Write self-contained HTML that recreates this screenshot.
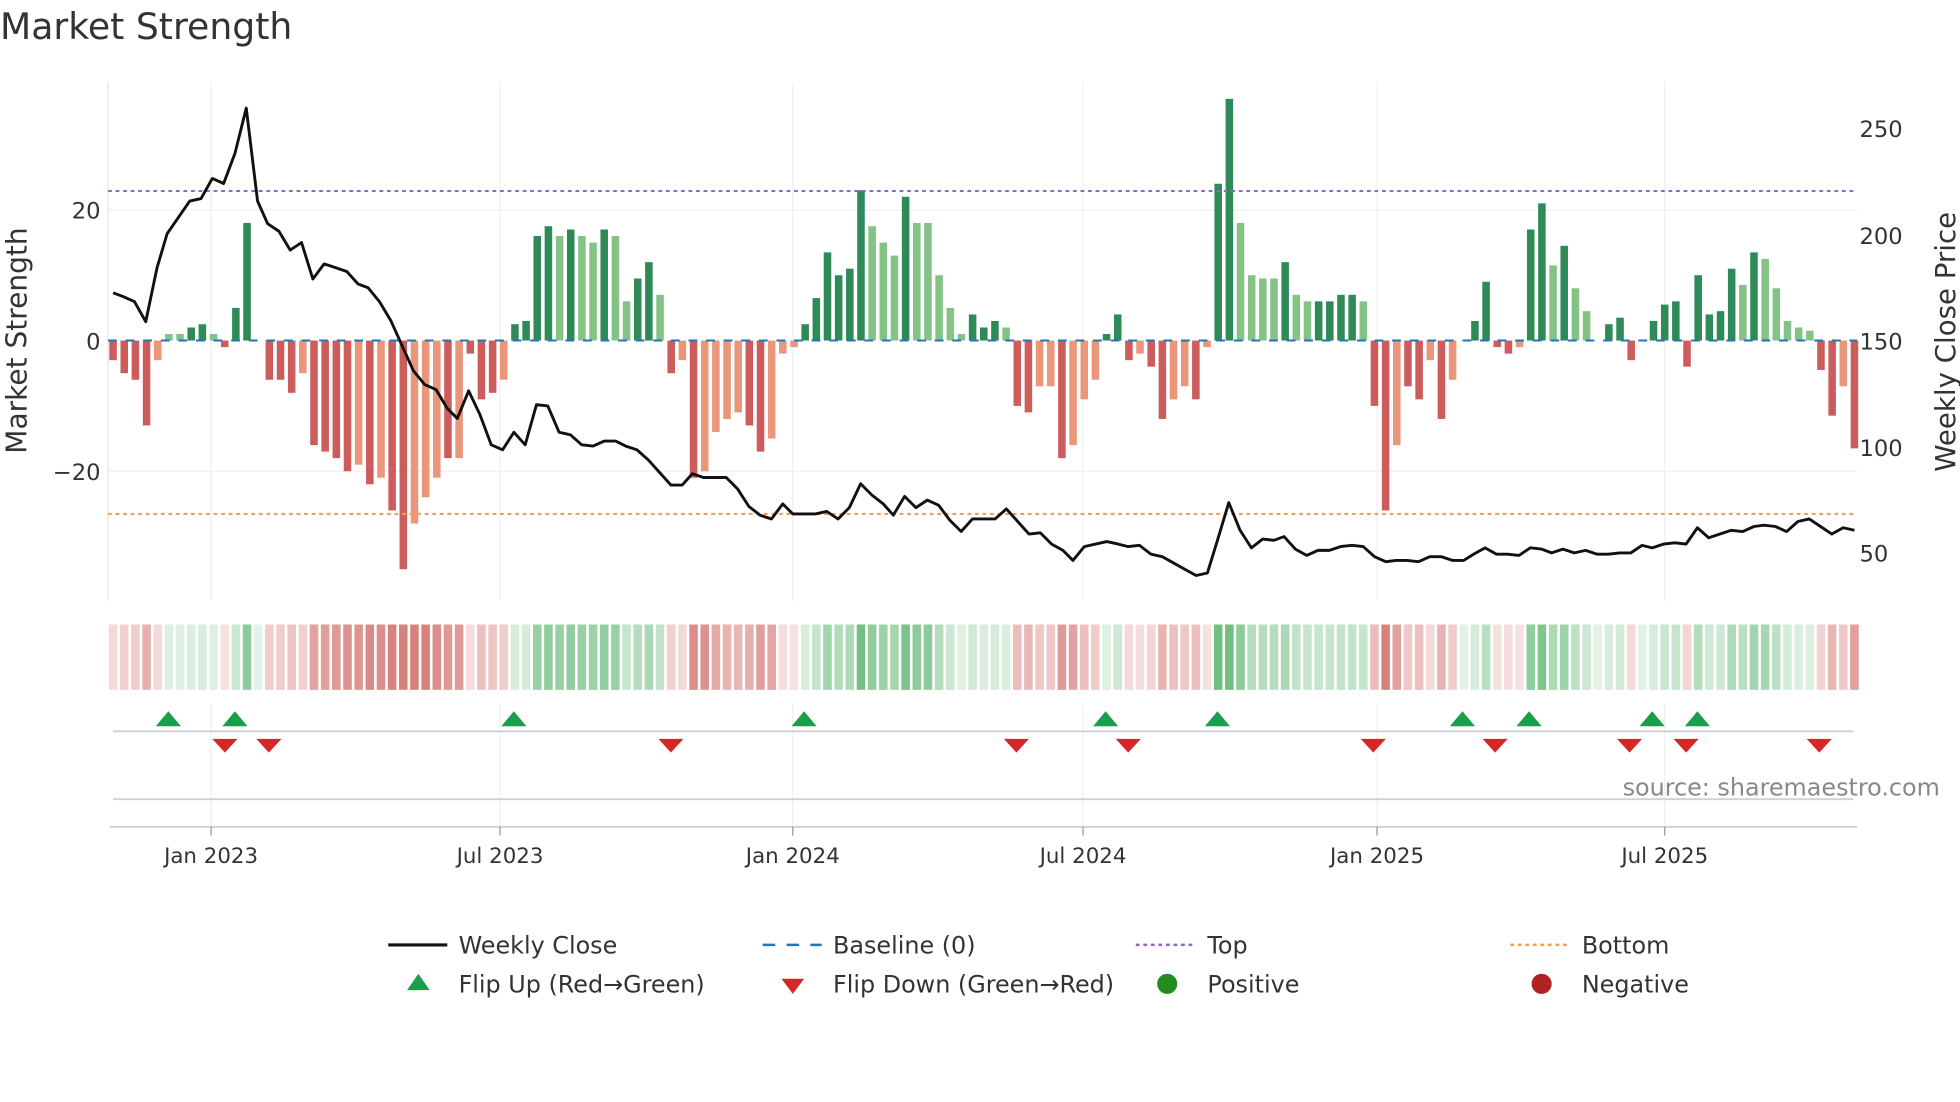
<!DOCTYPE html>
<html><head><meta charset="utf-8"><style>
html,body{margin:0;padding:0;background:#fff;}
svg{display:block;font-family:"DejaVu Sans","Liberation Sans",sans-serif;}
</style></head><body>
<svg id="s" width="1960" height="1102" viewBox="0 0 1560 877" xmlns="http://www.w3.org/2000/svg">
<rect width="1560" height="877" fill="#fff"/>
<text x="0" y="31" font-size="28.8" fill="#333">Market Strength</text>
<g stroke="#eef0f3" stroke-width="1">
<line x1="86" y1="167" x2="1478" y2="167"/><line x1="86" y1="375" x2="1478" y2="375"/>
<line x1="168" y1="65" x2="168" y2="478"/><line x1="398" y1="65" x2="398" y2="478"/>
<line x1="631" y1="65" x2="631" y2="478"/><line x1="862" y1="65" x2="862" y2="478"/>
<line x1="1096" y1="65" x2="1096" y2="478"/><line x1="1325" y1="65" x2="1325" y2="478"/>
<line x1="168" y1="560" x2="168" y2="658"/><line x1="398" y1="560" x2="398" y2="658"/>
<line x1="631" y1="560" x2="631" y2="658"/><line x1="862" y1="560" x2="862" y2="658"/>
<line x1="1096" y1="560" x2="1096" y2="658"/><line x1="1325" y1="560" x2="1325" y2="658"/>
</g>
<line x1="86" y1="65" x2="86" y2="478" stroke="#e3e6ea"/>
<g id="bars"></g>
<g id="heat"></g>
<line x1="86" y1="271" x2="1478" y2="271" stroke="#1f77b4" stroke-width="1.6" stroke-dasharray="7,7"/>
<line x1="86" y1="152" x2="1478" y2="152" stroke="#9467bd" stroke-width="1.6" stroke-dasharray="3,3"/>
<line x1="86" y1="409" x2="1478" y2="409" stroke="#f0a050" stroke-width="1.6" stroke-dasharray="3,3"/>
<polyline id="line" fill="none" stroke="#111" stroke-width="2.3" stroke-linejoin="round"/>
<g font-size="18" fill="#333">
<text x="80" y="174" text-anchor="end">20</text>
<text x="80" y="278" text-anchor="end">0</text>
<text x="80" y="382" text-anchor="end">−20</text>
<text x="1480" y="109">250</text>
<text x="1480" y="194">200</text>
<text x="1480" y="278">150</text>
<text x="1480" y="363">100</text>
<text x="1480" y="447">50</text>
<text transform="translate(21,271) rotate(-90)" text-anchor="middle" font-size="22.3">Market Strength</text>
<text transform="translate(1556,272) rotate(-90)" text-anchor="middle" font-size="22">Weekly Close Price</text>
</g>
<line x1="90" y1="582" x2="1475" y2="582" stroke="#cdd0d4" stroke-width="1.5"/>
<line x1="90" y1="636" x2="1475" y2="636" stroke="#cdd0d4" stroke-width="1.5"/>
<line x1="87" y1="658" x2="1478" y2="658" stroke="#cdd0d4" stroke-width="1.5"/>
<g id="marks"></g>
<text x="1544" y="633" text-anchor="end" font-size="19" fill="#888">source: sharemaestro.com</text>
<g font-size="17" fill="#333" text-anchor="middle">
<line x1="168" y1="658" x2="168" y2="665" stroke="#999"/><text x="168" y="687">Jan 2023</text>
<line x1="398" y1="658" x2="398" y2="665" stroke="#999"/><text x="398" y="687">Jul 2023</text>
<line x1="631" y1="658" x2="631" y2="665" stroke="#999"/><text x="631" y="687">Jan 2024</text>
<line x1="862" y1="658" x2="862" y2="665" stroke="#999"/><text x="862" y="687">Jul 2024</text>
<line x1="1096" y1="658" x2="1096" y2="665" stroke="#999"/><text x="1096" y="687">Jan 2025</text>
<line x1="1325" y1="658" x2="1325" y2="665" stroke="#999"/><text x="1325" y="687">Jul 2025</text>
</g>
<g font-size="19" fill="#333">
<line x1="309" y1="752" x2="356" y2="752" stroke="#111" stroke-width="2.5"/><text x="365" y="759">Weekly Close</text>
<line x1="607" y1="752" x2="654" y2="752" stroke="#1f77b4" stroke-width="2" stroke-dasharray="10,9"/><text x="663" y="759">Baseline (0)</text>
<line x1="904" y1="752" x2="951" y2="752" stroke="#9467bd" stroke-width="2" stroke-dasharray="3,3"/><text x="961" y="759">Top</text>
<line x1="1202" y1="752" x2="1249" y2="752" stroke="#f0a050" stroke-width="2" stroke-dasharray="3,3"/><text x="1259" y="759">Bottom</text>
<polygon points="324,788 342,788 333,775" fill="#1a9e4a"/><text x="365" y="790">Flip Up (Red→Green)</text>
<polygon points="622,779 640,779 631,791" fill="#d62728"/><text x="663" y="790">Flip Down (Green→Red)</text>
<circle cx="929" cy="783" r="8" fill="#228b22"/><text x="961" y="790">Positive</text>
<circle cx="1227" cy="783" r="8" fill="#b22222"/><text x="1259" y="790">Negative</text>
</g>
</svg>
<script>
var v="-3 -5 -6 -13 -3l 1l 1l 2 2.5 1l -1 5 18 0 -6 -6 -8 -5l -16 -17 -18 -20 -19l -22 -21l -26 -35 -28l -24l -21l -18 -18l -2 -9 -8 -6l 2.5 3 16 17.5 16l 17 16l 15l 17 16l 6l 9.5 12 7l -5 -3l -21 -20l -14l -12l -11l -13 -17 -15l -2l -1l 2.5 6.5 13.5 10 11 23 17.5l 15l 13l 22 18l 18l 10l 5l 1l 4 2 3 2l -10 -11 -7l -7l -18 -16l -9l -6l 1 4 -3 -2l -4 -12 -9l -7l -9 -1l 24 37 18l 10l 9.5l 9.5l 12 7l 6l 6 6 7 7 6l -10 -26 -16l -7 -9 -3l -12 -6l 0 3 9 -1 -2 -1l 17 21 11.5l 14.5 8l 4.5l 0 2.5 3.5 -3 0 3 5.5 6 -4 10 4 4.5 11 8.5l 13.5 12.5l 8l 3l 2l 1.5l -4.5 -11.5 -7l -16.5".split(" ");
var p="90:233,98:236,107:240,116:256,125:213,133:186,142:173,151:160,160:158,169:142,178:146,187:122,196:86,205:160,213:178,222:184,231:199,240:193,249:222,258:210,267:213,276:216,285:226,293:229,302:240,311:255,320:275,329:295,338:306,347:310,356:325,364:333,373:311,382:330,391:354,400:358,409:344,418:354,427:322,436:323,445:344,454:346,463:354,472:355,481:351,490:351,498:355,507:358,516:366,525:376,534:386,543:386,551:377,560:380,569:380,578:380,587:389,596:403,605:410,614:413,623:401,631:409,640:409,649:409,658:407,667:413,676:404,685:385,694:394,703:401,711:410,720:395,729:404,738:398,747:402,756:414,765:423,774:413,783:413,792:413,801:405,810:415,819:425,828:424,837:433,846:438,854:446,863:435,872:433,881:431,890:433,898:435,907:434,916:441,925:443,934:448,943:453,952:458,961:456,969:430,978:400,987:422,996:436,1005:429,1014:430,1022:427,1031:437,1040:442,1049:438,1058:438,1067:435,1076:434,1085:435,1094:443,1103:447,1111:446,1120:446,1129:447,1138:443,1147:443,1156:446,1165:446,1173:441,1182:436,1191:441,1200:441,1209:442,1218:436,1227:437,1235:440,1244:437,1253:440,1262:438,1271:441,1280:441,1289:440,1298:440,1307:434,1315:436,1324:433,1333:432,1342:433,1351:420,1360:428,1369:425,1378:422,1387:423,1396:419,1404:418,1413:419,1422:423,1431:415,1440:413,1449:419,1458:425,1467:420,1476:422";
var ns="http://www.w3.org/2000/svg";
function el(t,a,par){var e=document.createElementNS(ns,t);for(var k in a)e.setAttribute(k,a[k]);document.getElementById(par).appendChild(e);}
var n=v.length, x0=90, dx=(1476-90)/(n-1);
for(var i=0;i<n;i++){
 var s=v[i],light=s.indexOf("l")>=0,val=parseFloat(s),x=x0+i*dx;
 var h=Math.abs(val)*5.2, y=val>=0?271-h:271;
 var c=val>=0?(light?"#85c285":"#2e8b57"):(light?"#e9967a":"#cd5c5c");
 if(h>0.5) el("rect",{x:x-3,y:y,width:6,height:h,fill:c},"bars");
 var a=Math.min(1,0.2+Math.abs(val)/30);
 var hc=val>=0?"rgba(46,160,70,"+a*0.68+")":"rgba(200,80,75,"+a*0.72+")";
 el("rect",{x:x-3.4,y:497,width:6.8,height:52,fill:hc},"heat");
}
document.getElementById("line").setAttribute("points",p.split(",").map(function(q){return q.replace(":",",");}).join(" "));
var up=[134,187,409,640,880,969,1164,1217,1315,1351],dn=[179,214,534,809,898,1093,1190,1297,1342,1448];
up.forEach(function(x){el("polygon",{points:(x-10)+",578 "+(x+10)+",578 "+x+",566",fill:"#1a9e4a"},"marks");});
dn.forEach(function(x){el("polygon",{points:(x-10)+",588 "+(x+10)+",588 "+x+",599",fill:"#d62728"},"marks");});
</script>
</body></html>
